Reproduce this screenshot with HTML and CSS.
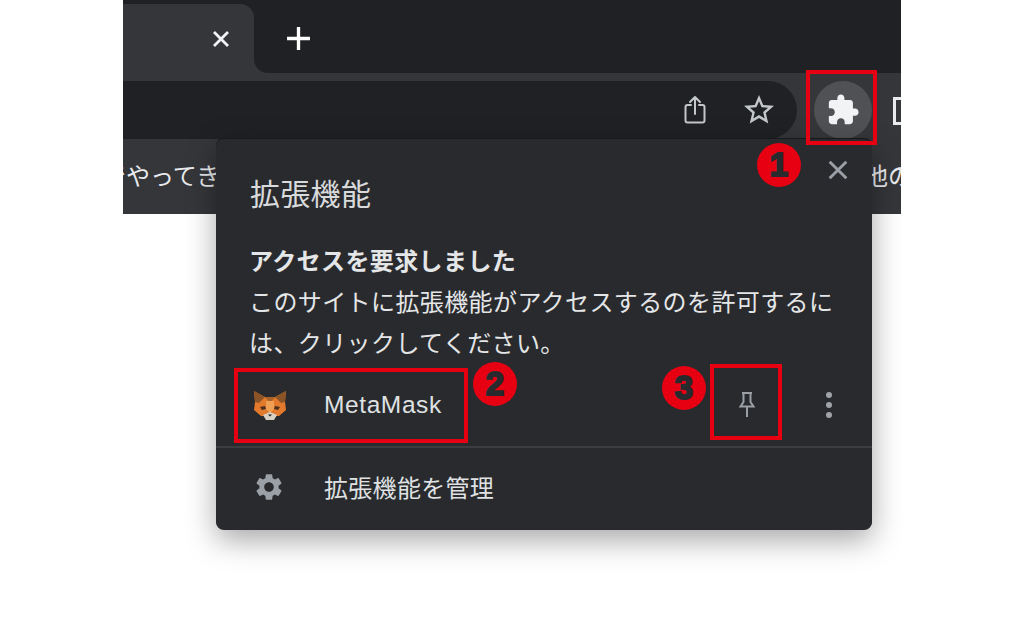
FILE: index.html
```html
<!DOCTYPE html>
<html lang="ja">
<head>
    <meta charset="UTF-8">
    <title>拡張機能</title>
    <link rel="stylesheet" href="styles.css">
</head>
<body>
    <div class="page">
        <div class="window">
            <div class="tabstrip">
                <div class="tab">
                    <svg class="tab-close" viewBox="0 0 18 18"><path d="M2 2L16 16M16 2L2 16"/></svg>
                </div>
                <div class="tabrest">
                    <svg class="new-tab" viewBox="0 0 24 24"><path d="M12 1V23M1 12H23"/></svg>
                </div>
            </div>
            <div class="toolbar">
                <div class="omnibox">
                    <svg class="omni-icon" viewBox="0 0 24 30"><path d="M12 19V2M7 7L12 2L17 7M8 10H4.500Q2.500 10 2.500 12V25.500Q2.500 27.500 4.500 27.500H19.500Q21.500 27.500 21.500 25.500V12Q21.500 10 19.500 10H16"/></svg>
                    <svg class="omni-icon star" viewBox="0 0 24 24"><path d="M22 9.240l-7.190-.620L12 2 9.190 8.630 2 9.240l5.460 4.730L5.820 21 12 17.270 18.180 21l-1.630-7.030L22 9.240zM12 15.400l-3.760 2.270 1-4.280-3.320-2.880 4.380-.380L12 6.100l1.710 4.040 4.380.380-3.320 2.880 1 4.280L12 15.400z"/></svg>
                </div>
                <div class="ext-button">
                    <svg class="puzzle" viewBox="0 0 24 24"><path d="M20.500 11H19V7c0-1.100-.900-2-2-2h-4V3.500C13 2.120 11.880 1 10.500 1S8 2.120 8 3.500V5H4c-1.100 0-1.990.900-1.990 2v3.800H3.500c1.490 0 2.700 1.210 2.700 2.700s-1.210 2.700-2.700 2.700H2V20c0 1.100.900 2 2 2h3.800v-1.500c0-1.490 1.210-2.700 2.700-2.700 1.490 0 2.700 1.210 2.700 2.700V22H17c1.100 0 2-.900 2-2v-4h1.500c1.380 0 2.500-1.120 2.500-2.500S21.880 11 20.500 11z"/></svg>
                </div>
                <div class="side-icon"></div>
            </div>
            <div class="bookmarks">
                <span class="mark-left">でやってきた</span>
                <span class="mark-right">他の</span>
            </div>
        </div>

        <div class="popup">
            <div class="popup-head">
                <h1 class="popup-title">拡張機能</h1>
                <svg class="popup-close" viewBox="0 0 18 18"><path d="M1.500 1.500L16.500 16.500M16.500 1.500L1.500 16.500"/></svg>
            </div>
            <div class="popup-body">
                <strong>アクセスを要求しました</strong>
                <p>このサイトに拡張機能がアクセスするのを許可するには、クリックしてください。</p>
            </div>
            <div class="row row-ext">
                <svg class="row-icon fox" viewBox="0 0 34 32">
                    <path fill="#e2792c" d="M1 2L12 8H22L33 2L32 13L33 21L26 27H8L1 21L2 13Z"/>
                    <path fill="#8a5426" d="M1 2L12 8L6 14L2 13Z"/>
                    <path fill="#8a5426" d="M33 2L22 8L28 14L32 13Z"/>
                    <path fill="#a8622a" d="M12 8H22L17 14Z"/>
                    <path fill="#efa055" d="M13 12H21L21 20L17 24L13 20Z"/>
                    <path fill="#4a3020" d="M7 18L12 17L13 20L9 21Z"/>
                    <path fill="#4a3020" d="M27 18L22 17L21 20L25 21Z"/>
                    <path fill="#d9d0c4" d="M10 26L17 23L24 26L21 31H13Z"/>
                    <path fill="#1c1c1c" d="M15 25.500H19L17 27.500Z"/>
                </svg>
                <span class="row-label">MetaMask</span>
                <svg class="pin" viewBox="0 0 18 28"><path d="M4 2H14M5.500 2V11L2.500 15.500H15.500L12.500 11V2M9 15.500V26"/></svg>
                <div class="dots"><i></i><i></i><i></i></div>
            </div>
            <div class="row row-manage">
                <svg class="row-icon gear" viewBox="0 0 24 24"><path d="M19.140 12.940c.040-.300.060-.610.060-.940 0-.320-.020-.640-.070-.940l2.030-1.580c.180-.140.230-.410.120-.610l-1.920-3.320c-.120-.220-.370-.290-.590-.220l-2.390.960c-.500-.380-1.030-.700-1.620-.940l-.360-2.540c-.040-.240-.240-.410-.480-.410h-3.840c-.240 0-.430.170-.470.410l-.360 2.540c-.590.240-1.130.570-1.620.940l-2.390-.960c-.220-.080-.470 0-.590.220L2.740 8.870c-.120.210-.080.470.120.610l2.030 1.580c-.050.300-.090.630-.090.940s.020.640.070.940l-2.030 1.580c-.180.140-.230.410-.120.610l1.920 3.320c.120.220.370.290.590.220l2.390-.960c.500.380 1.030.700 1.620.940l.360 2.540c.050.240.240.410.480.410h3.840c.240 0 .440-.170.470-.410l.360-2.540c.590-.240 1.130-.560 1.620-.940l2.390.960c.220.080.470 0 .590-.220l1.920-3.320c.120-.220.070-.470-.120-.610l-2.010-1.580zM12 15.600c-1.980 0-3.600-1.620-3.600-3.600s1.620-3.600 3.600-3.600 3.600 1.620 3.600 3.600-1.620 3.600-3.600 3.600z"/></svg>
                <span class="row-label">拡張機能を管理</span>
            </div>
        </div>

        <div class="mark mark-one"></div>
        <div class="mark mark-two"></div>
        <div class="mark mark-three"></div>
        <div class="badge badge-one">1</div>
        <div class="badge badge-two">2</div>
        <div class="badge badge-three">3</div>
    </div>
</body>
</html>
```

FILE: styles.css
```css
body {
    margin: 0;
    background-color: #fff;
    font-family: "Noto Sans CJK JP", "Liberation Sans", sans-serif;
}
.page {
    position: relative;
    width: 1024px;
    height: 640px;
    overflow: hidden;
}
.window {
    width: 778px;
    margin-left: 123px;
    display: flex;
    flex-direction: column;
}
.tabstrip {
    height: 73px;
    display: flex;
    background: linear-gradient(#202124 50%, #35363a 50%);
}
.tab {
    width: 131px;
    margin-top: 4px;
    background-color: #35363a;
    border-top-right-radius: 14px;
    display: flex;
    align-items: center;
    justify-content: flex-end;
    padding-right: 24px;
    box-sizing: border-box;
}
.tab-close {
    width: 18px;
    height: 18px;
    fill: none;
    stroke: #f1f3f4;
    stroke-width: 2.8;
}
.tabrest {
    flex: 1;
    background-color: #202124;
    border-bottom-left-radius: 14px;
    display: flex;
    align-items: center;
    padding: 4px 0 0 32px;
}
.new-tab {
    width: 25px;
    height: 25px;
    fill: none;
    stroke: #fff;
    stroke-width: 3.2;
}
.toolbar {
    height: 66px;
    background-color: #35363a;
    display: flex;
    align-items: flex-start;
    padding-top: 8px;
    box-sizing: border-box;
    overflow: hidden;
}
.omnibox {
    flex: none;
    width: 674px;
    height: 58px;
    background-color: #202124;
    border-radius: 0 29px 29px 0;
    display: flex;
    align-items: center;
    justify-content: flex-end;
    gap: 34px;
    padding-right: 20px;
    box-sizing: border-box;
}
.omni-icon {
    width: 24px;
    height: 30px;
    fill: none;
    stroke: #c4c7c9;
    stroke-width: 2;
    stroke-linecap: round;
    stroke-linejoin: round;
}
.star {
    width: 36px;
    height: 36px;
    fill: #c4c7c9;
    stroke: none;
}
.ext-button {
    flex: none;
    width: 58px;
    height: 58px;
    margin-left: 17px;
    border-radius: 50%;
    background-color: #505154;
    display: flex;
    align-items: center;
    justify-content: center;
}
.puzzle {
    width: 34px;
    height: 34px;
    fill: #f1f3f4;
}
.side-icon {
    flex: none;
    width: 20px;
    height: 28px;
    margin: 16px 0 0 21px;
    border: 3px solid #e8eaed;
    box-sizing: border-box;
}
.bookmarks {
    height: 75px;
    background-color: #35363a;
    display: flex;
    justify-content: space-between;
    align-items: center;
    color: #e8eaed;
    font-size: 24px;
    overflow: hidden;
    white-space: nowrap;
    padding-bottom: 4px;
    box-sizing: border-box;
}
.mark-left {
    margin-left: -21px;
}
.mark-right {
    margin-right: -11px;
}
.popup {
    position: absolute;
    left: 216px;
    top: 139px;
    width: 656px;
    height: 391px;
    background-color: #292a2d;
    border-radius: 8px;
    box-shadow: 0 -1px 0 #18191b, 0 10px 30px rgba(0, 0, 0, 0.35);
    color: #e4e6e8;
    display: flex;
    flex-direction: column;
    box-sizing: border-box;
    padding-top: 32px;
}
.popup-head {
    display: flex;
    justify-content: space-between;
    align-items: flex-start;
    padding: 0 24px 0 34px;
    height: 42px;
}
.popup-title {
    margin: 0;
    font-size: 30px;
    font-weight: 400;
    line-height: 42px;
    letter-spacing: 0.3px;
    color: #d8dadc;
}
.popup-close {
    width: 20px;
    height: 20px;
    margin-top: -11px;
    fill: none;
    stroke: #9aa0a6;
    stroke-width: 2.6;
}
.popup-body {
    padding: 26px 34px 0 33px;
    font-size: 24px;
    line-height: 41px;
    letter-spacing: 0.4px;
}
.popup-body strong {
    display: block;
    font-weight: 700;
}
.popup-body p {
    margin: 0;
}
.row {
    display: flex;
    align-items: center;
    padding-left: 37px;
}
.row-ext {
    height: 83px;
    padding-top: 1px;
    border-bottom: 2px solid #3c3d40;
}
.row-manage {
    height: 82px;
    padding-bottom: 5px;
    box-sizing: border-box;
}
.row-icon {
    width: 34px;
    height: 32px;
    flex: none;
}
.gear {
    width: 32px;
    height: 32px;
    fill: #9aa0a6;
}
.row-label {
    margin-left: 37px;
    font-size: 24px;
    letter-spacing: 0.3px;
    color: #dfe1e3;
}
.row-manage .row-label {
    margin-left: 39px;
}
.row-ext .row-label {
    font-family: "Liberation Sans", sans-serif;
    font-size: 24.5px;
    letter-spacing: 0.6px;
}
.pin {
    width: 18px;
    height: 28px;
    margin-left: 296px;
    fill: none;
    stroke: #9aa0a6;
    stroke-width: 2;
}
.dots {
    margin-left: 70px;
    display: flex;
    flex-direction: column;
    gap: 4px;
}
.dots i {
    display: block;
    width: 6px;
    height: 6px;
    border-radius: 50%;
    background-color: #a0a3a8;
}
.mark {
    position: absolute;
    border: 4px solid #e60012;
    box-sizing: border-box;
}
.mark-one {
    left: 806px;
    top: 70px;
    width: 71px;
    height: 75px;
}
.mark-two {
    left: 234px;
    top: 368px;
    width: 234px;
    height: 75px;
}
.mark-three {
    left: 710px;
    top: 364px;
    width: 72px;
    height: 76px;
}
.badge {
    position: absolute;
    width: 44px;
    height: 44px;
    border-radius: 50%;
    background-color: #e60012;
    color: #292a2d;
    font-family: "Liberation Sans", sans-serif;
    font-weight: 700;
    font-size: 33px;
    line-height: 44px;
    text-align: center;
    -webkit-text-stroke: 2px #292a2d;
}
.badge-one {
    left: 757px;
    top: 143px;
}
.badge-two {
    left: 473px;
    top: 362px;
}
.badge-three {
    left: 662px;
    top: 366px;
}
```
